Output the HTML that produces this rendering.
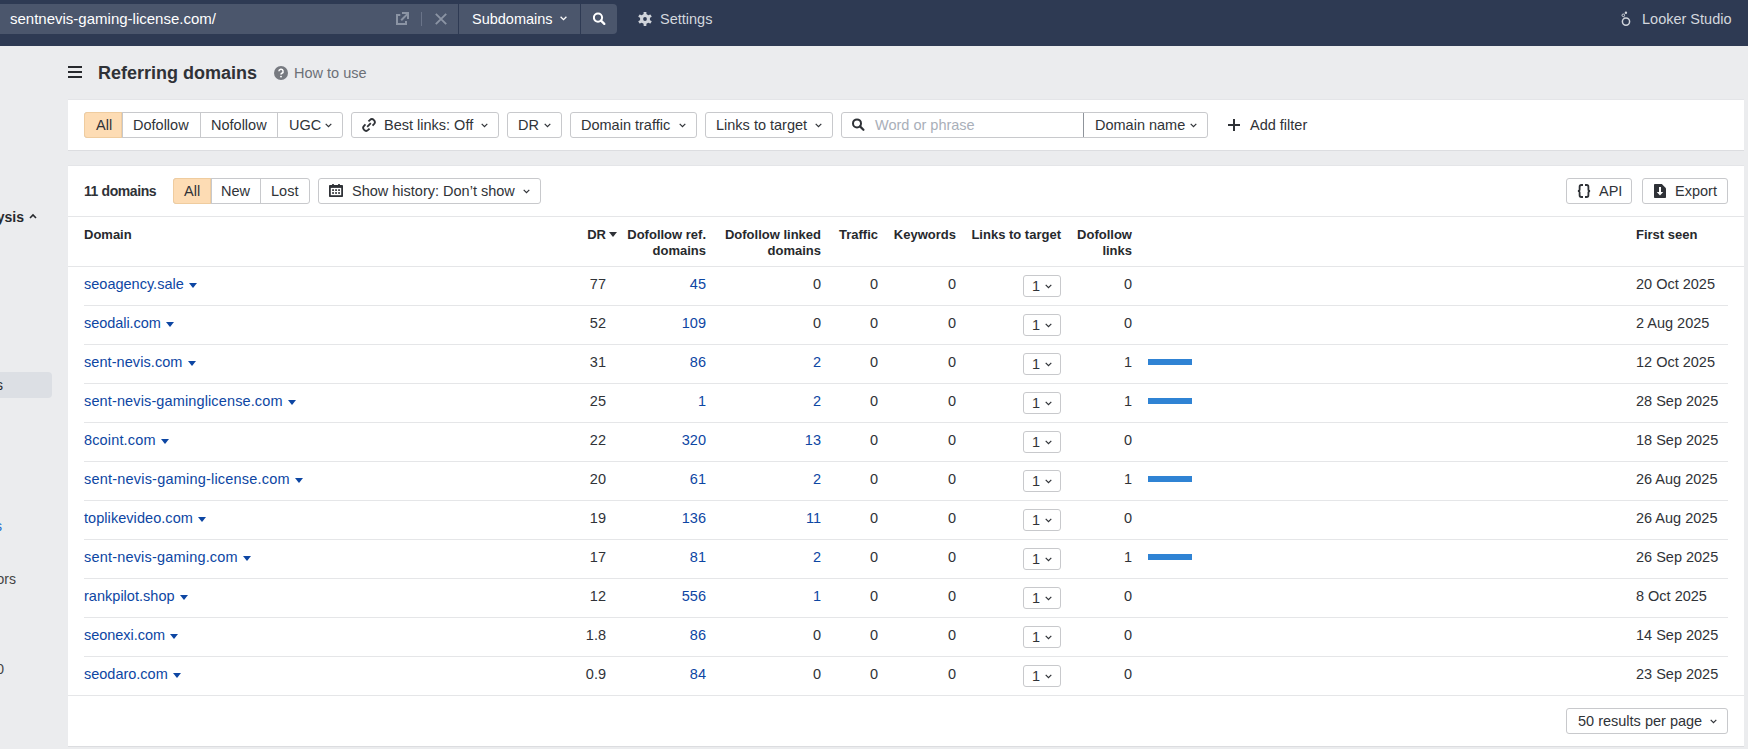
<!DOCTYPE html>
<html><head><meta charset="utf-8">
<style>
*{box-sizing:border-box;margin:0;padding:0}
html,body{width:1748px;height:749px;overflow:hidden;background:#ebecee;font-family:"Liberation Sans",sans-serif;color:#303338;font-size:14px}
.abs{position:absolute}
#top{position:absolute;left:0;top:0;width:1748px;height:46px;background:#2e3a53}
#inp{position:absolute;left:0;top:4px;width:458px;height:30px;background:#4b566c}
#url{position:absolute;left:10px;top:7px;color:#fff;font-size:15px;line-height:16px;white-space:nowrap}
#sub{position:absolute;left:459px;top:4px;width:121px;height:30px;background:#4b566c}
#srch{position:absolute;left:581px;top:4px;width:36px;height:30px;background:#4b566c;border-radius:0 4px 4px 0}
.wt{color:#fff;white-space:nowrap;position:absolute}
.lt{color:#d3d7de;white-space:nowrap;position:absolute}
#hdr{position:absolute;left:98px;top:63px;font-size:18px;font-weight:bold;color:#2f3237;white-space:nowrap;line-height:21px}
.panel{position:absolute;left:68px;width:1676px;background:#fff;box-shadow:0 1px 0 #dcdde0,0 -1px 0 #e4e5e8}
.btn{position:absolute;height:26px;border:1px solid #c8c9cc;border-radius:3px;background:#fff;white-space:nowrap;line-height:24px;font-size:14.5px;color:#303338}
.btn span{position:absolute;top:0}
.seg{position:absolute;top:0;height:24px;border-left:1px solid #c8c9cc}
.chev{position:absolute;width:7px;height:5px}
.sel{background:#fddcb4}
.line{position:absolute;height:1px;background:#e5e6e8}
.row{position:absolute;left:0;width:1748px;height:39px}
.c{position:absolute;top:10px;white-space:nowrap;font-size:14.5px;line-height:17px}
.r{text-align:right}
.blue{color:#0d46a3}
.th{position:absolute;font-weight:bold;font-size:13px;line-height:16px;text-align:right;white-space:nowrap;color:#27292d}
.bar{position:absolute;left:1148px;top:15px;width:44px;height:6px;background:#2f83d4}
.b1{position:absolute;left:1023px;top:9px;width:38px;height:22px;border:1px solid #c8c9cc;border-radius:3px}
</style></head><body>
<div id="top">
  <div id="inp"><div id="url">sentnevis-gaming-license.com/</div>
    <svg class="abs" style="left:396px;top:8px" width="14" height="14" viewBox="0 0 14 14"><path d="M4.3 2.9H1V12H10V9" fill="none" stroke="#8b94a4" stroke-width="2"/><path d="M6 1H12V7" fill="none" stroke="#8b94a4" stroke-width="2"/><path d="M5.2 8.2L11.8 1.6" stroke="#8b94a4" stroke-width="2"/></svg>
    <div class="abs" style="left:421px;top:8px;width:1px;height:14px;background:#6a7489"></div>
    <svg class="abs" style="left:435px;top:9px" width="12" height="12" viewBox="0 0 12 12"><path d="M0.8 0.8L11.2 11.2M11.2 0.8L0.8 11.2" stroke="#8b94a4" stroke-width="1.9"/></svg>
  </div>
  <div id="sub"><div class="wt" style="left:13px;top:7px;font-size:14.5px;line-height:16px">Subdomains</div>
    <svg class="abs" style="left:101px;top:12px" width="7" height="5" viewBox="0 0 7 5"><path d="M0.6 0.8L3.5 3.7L6.4 0.8" fill="none" stroke="#fff" stroke-width="1.3"/></svg></div>
  <div id="srch"><svg class="abs" style="left:12px;top:8px" width="13" height="13" viewBox="0 0 13 13"><circle cx="5" cy="5.6" r="4.1" fill="none" stroke="#fff" stroke-width="2"/><path d="M8 8.6L11.3 11.9" stroke="#fff" stroke-width="2.2" stroke-linecap="round"/></svg></div>
  <svg class="abs" style="left:638px;top:12px" width="14" height="14" viewBox="0 0 14 14"><g fill="#d0d4db"><rect x="5.6" y="0" width="2.8" height="3.5" rx="0.4" transform="rotate(0 7 7)"/><rect x="5.6" y="0" width="2.8" height="3.5" rx="0.4" transform="rotate(60 7 7)"/><rect x="5.6" y="0" width="2.8" height="3.5" rx="0.4" transform="rotate(120 7 7)"/><rect x="5.6" y="0" width="2.8" height="3.5" rx="0.4" transform="rotate(180 7 7)"/><rect x="5.6" y="0" width="2.8" height="3.5" rx="0.4" transform="rotate(240 7 7)"/><rect x="5.6" y="0" width="2.8" height="3.5" rx="0.4" transform="rotate(300 7 7)"/><circle cx="7" cy="7" r="5"/></g><circle cx="7" cy="7" r="1.9" fill="#2e3a53"/></svg>
  <div class="lt" style="left:660px;top:11px;font-size:14.5px;line-height:16px">Settings</div>
  <svg class="abs" style="left:1614px;top:8px" width="26" height="22" viewBox="0 0 26 22"><circle cx="12" cy="13.6" r="3.6" fill="none" stroke="#d0d4db" stroke-width="1.5"/><circle cx="9.3" cy="7.3" r="1.3" fill="none" stroke="#d0d4db" stroke-width="1"/><circle cx="11.9" cy="4.8" r="1.2" fill="#d0d4db"/><path d="M10.3 6.3L11.2 5.5" stroke="#a0a6b2" stroke-width="0.8"/><path d="M9.8 8.6L10.6 10.3" stroke="#a0a6b2" stroke-width="0.8"/></svg>
  <div class="lt" style="left:1642px;top:11px;font-size:14.5px;line-height:16px">Looker Studio</div>
</div>

<!-- sidebar remnants -->
<div class="abs" style="left:-60px;top:209px;font-weight:bold;font-size:14px;color:#27292d;white-space:nowrap;width:84px;text-align:right">Analysis</div>
<svg class="abs" style="left:29px;top:213px" width="8" height="6" viewBox="0 0 8 6"><path d="M1 5L4 2L7 5" fill="none" stroke="#27292d" stroke-width="1.6"/></svg>
<div class="abs" style="left:-10px;top:372px;width:62px;height:26px;background:#dcdfe4;border-radius:4px"></div>
<div class="abs" style="left:-60px;top:377px;width:63px;text-align:right;font-size:14px;color:#27292d">ages</div>
<div class="abs" style="left:-61px;top:518px;width:63px;text-align:right;font-size:14px;color:#1d6fd0">links</div>
<div class="abs" style="left:-60px;top:571px;width:76px;text-align:right;font-size:14px;color:#444">Competitors</div>
<div class="abs" style="left:-60px;top:661px;width:64px;text-align:right;font-size:14px;color:#444">100</div>

<!-- header -->
<svg class="abs" style="left:68px;top:66px" width="14" height="12" viewBox="0 0 14 12"><path d="M0 1H14M0 6H14M0 11H14" stroke="#27292d" stroke-width="2"/></svg>
<div id="hdr">Referring domains</div>
<svg class="abs" style="left:274px;top:66px" width="14" height="14" viewBox="0 0 14 14"><circle cx="7" cy="7" r="7" fill="#777a80"/><path d="M4.9 5.3a2.1 2.1 0 1 1 3 1.9c-.6.3-.9.6-.9 1.3" fill="none" stroke="#fff" stroke-width="1.5"/><circle cx="7" cy="10.6" r=".95" fill="#fff"/></svg>
<div class="abs" style="left:294px;top:65px;font-size:14.5px;color:#6c7077;white-space:nowrap;line-height:16px">How to use</div>

<!-- filter panel -->
<div class="panel" style="top:100px;height:50px"></div>
<div id="filters"><div class="btn" style="left:84px;top:112px;width:259px"><div class="seg" style="left:37px"></div><div class="seg" style="left:115px"></div><div class="seg" style="left:192px"></div><div class="abs sel" style="left:-1px;top:-1px;width:38px;height:26px;border:1px solid #efcc9f;border-radius:3px 0 0 3px"></div><span style="left:11px">All</span><span style="left:48px">Dofollow</span><span style="left:126px">Nofollow</span><span style="left:204px">UGC</span><svg class="chev" style="left:240px;top:10px" viewBox="0 0 7 5"><path d="M0.7 0.9L3.5 3.7L6.3 0.9" fill="none" stroke="#2f3237" stroke-width="1.2"/></svg></div>
<div class="btn" style="left:351px;top:112px;width:148px"><svg class="abs" style="left:10px;top:5px" width="14" height="14" viewBox="0 0 14 14"><g fill="none" stroke="#2f3237" stroke-width="1.85"><path d="M6.44 3.46L7.85 2.05A2.9 2.9 0 0 1 11.95 6.15L10.54 7.56"/><path d="M7.56 10.54L6.15 11.95A2.9 2.9 0 0 1 2.05 7.85L3.46 6.44"/><path d="M5.2 8.8L8.8 5.2"/></g></svg><span style="left:32px">Best links: Off</span><svg class="chev" style="left:129px;top:10px" viewBox="0 0 7 5"><path d="M0.7 0.9L3.5 3.7L6.3 0.9" fill="none" stroke="#2f3237" stroke-width="1.2"/></svg></div>
<div class="btn" style="left:507px;top:112px;width:55px"><span style="left:10px">DR</span><svg class="chev" style="left:36px;top:10px" viewBox="0 0 7 5"><path d="M0.7 0.9L3.5 3.7L6.3 0.9" fill="none" stroke="#2f3237" stroke-width="1.2"/></svg></div>
<div class="btn" style="left:570px;top:112px;width:127px"><span style="left:10px">Domain traffic</span><svg class="chev" style="left:108px;top:10px" viewBox="0 0 7 5"><path d="M0.7 0.9L3.5 3.7L6.3 0.9" fill="none" stroke="#2f3237" stroke-width="1.2"/></svg></div>
<div class="btn" style="left:705px;top:112px;width:128px"><span style="left:10px">Links to target</span><svg class="chev" style="left:109px;top:10px" viewBox="0 0 7 5"><path d="M0.7 0.9L3.5 3.7L6.3 0.9" fill="none" stroke="#2f3237" stroke-width="1.2"/></svg></div>
<div class="btn" style="left:841px;top:112px;width:367px"><svg class="abs" style="left:10px;top:5px" width="13" height="13" viewBox="0 0 13 13"><circle cx="5" cy="5.4" r="4" fill="none" stroke="#2f3237" stroke-width="2"/><path d="M8 8.4L11.4 11.8" stroke="#2f3237" stroke-width="2.2" stroke-linecap="round"/></svg><span style="left:33px;color:#a9afb9">Word or phrase</span><div class="seg" style="left:241px;border-color:#8f949b"></div><span style="left:253px">Domain name</span><svg class="chev" style="left:348px;top:10px" viewBox="0 0 7 5"><path d="M0.7 0.9L3.5 3.7L6.3 0.9" fill="none" stroke="#2f3237" stroke-width="1.2"/></svg></div>
<svg class="abs" style="left:1228px;top:119px" width="12" height="12" viewBox="0 0 12 12"><path d="M6 0V12M0 6H12" stroke="#2f3237" stroke-width="2"/></svg>
<div class="abs" style="left:1250px;top:117px;font-size:14.5px;line-height:17px;white-space:nowrap;color:#2f3237">Add filter</div></div>

<!-- table panel -->
<div class="panel" style="top:166px;height:580px"></div>
<div id="tbl"><div class="abs" style="left:84px;top:183px;font-weight:bold;font-size:14px;line-height:16px;white-space:nowrap;color:#2f3237;letter-spacing:-0.4px">11 domains</div>
<div class="btn" style="left:173px;top:178px;width:137px"><div class="seg" style="left:37px"></div><div class="seg" style="left:86px"></div><div class="abs sel" style="left:-1px;top:-1px;width:38px;height:26px;border:1px solid #efcc9f;border-radius:3px 0 0 3px"></div><span style="left:10px">All</span><span style="left:47px">New</span><span style="left:97px">Lost</span></div>
<div class="btn" style="left:318px;top:178px;width:223px"><svg class="abs" style="left:10px;top:5px" width="14" height="14" viewBox="0 0 14 14"><rect x="3" y="0" width="2" height="2" rx="0.6" fill="#2f3237"/><rect x="9" y="0" width="2" height="2" rx="0.6" fill="#2f3237"/><rect x="0" y="1" width="14" height="12" rx="0.8" fill="#2f3237"/><rect x="1.8" y="3.9" width="10.4" height="7.3" fill="#fff"/><g fill="#2f3237"><rect x="3.1" y="5.3" width="1.9" height="1.6"/><rect x="6.1" y="5.3" width="1.9" height="1.6"/><rect x="9.1" y="5.3" width="1.9" height="1.6"/><rect x="3.1" y="8.2" width="1.9" height="1.6"/><rect x="6.1" y="8.2" width="1.9" height="1.6"/><rect x="9.1" y="8.2" width="1.9" height="1.6"/></g></svg><span style="left:33px">Show history: Don’t show</span><svg class="chev" style="left:204px;top:10px" viewBox="0 0 7 5"><path d="M0.7 0.9L3.5 3.7L6.3 0.9" fill="none" stroke="#2f3237" stroke-width="1.2"/></svg></div>
<div class="btn" style="left:1566px;top:178px;width:66px"><svg class="abs" style="left:10px;top:5px" width="14" height="14" viewBox="0 0 14 14"><g fill="none" stroke="#2f3237" stroke-width="1.8"><path d="M6 1H4.3Q2.6 1 2.6 2.7V5.4Q2.6 7 0.9 7Q2.6 7 2.6 8.6V11.3Q2.6 13 4.3 13H6"/><path d="M8 1H9.7Q11.4 1 11.4 2.7V5.4Q11.4 7 13.1 7Q11.4 7 11.4 8.6V11.3Q11.4 13 9.7 13H8"/></g></svg><span style="left:32px">API</span></div>
<div class="btn" style="left:1642px;top:178px;width:86px"><svg class="abs" style="left:11px;top:5px" width="12" height="14" viewBox="0 0 12 14"><path d="M0 0.8Q0 0 0.8 0H7.8L12 4.2V13.2Q12 14 11.2 14H0.8Q0 14 0 13.2Z" fill="#2f3237"/><rect x="5" y="3" width="2" height="5.4" fill="#fff"/><path d="M2.8 8.1H9.2L6 11.4Z" fill="#fff"/></svg><span style="left:32px">Export</span></div>
<div class="line" style="left:68px;top:216px;width:1676px"></div>
<div class="th" style="left:84px;top:227px;text-align:left">Domain</div>
<div class="th" style="right:1142px;top:227px">DR</div>
<svg class="abs" style="left:609px;top:232px" width="8" height="5" viewBox="0 0 8 5"><path d="M0 0H8L4 5z" fill="#2f3237"/></svg>
<div class="th" style="right:1042px;top:227px">Dofollow ref.<br>domains</div>
<div class="th" style="right:927px;top:227px">Dofollow linked<br>domains</div>
<div class="th" style="right:870px;top:227px">Traffic</div>
<div class="th" style="right:792px;top:227px">Keywords</div>
<div class="th" style="right:687px;top:227px">Links to target</div>
<div class="th" style="right:616px;top:227px">Dofollow<br>links</div>
<div class="th" style="left:1636px;top:227px;text-align:left">First seen</div>
<div class="line" style="left:68px;top:266px;width:1676px"></div>
<div class="row" style="top:266px"><div class="c blue" style="left:84px"><span style="letter-spacing:0.007px">seoagency.sale</span><svg style="margin-left:5px;vertical-align:1px" width="8" height="5" viewBox="0 0 8 5"><path d="M0 0H8L4 5z" fill="#0d46a3"/></svg></div><div class="c r " style="right:1142px">77</div><div class="c r blue" style="right:1042px">45</div><div class="c r " style="right:927px">0</div><div class="c r " style="right:870px">0</div><div class="c r " style="right:792px">0</div><div class="b1"><span class="abs" style="left:8px;top:2px;font-size:14.5px;line-height:17px">1</span><svg class="chev" style="left:21px;top:8px" viewBox="0 0 7 5"><path d="M0.7 0.9L3.5 3.7L6.3 0.9" fill="none" stroke="#2f3237" stroke-width="1.2"/></svg></div><div class="c r " style="right:616px">0</div><div class="c" style="left:1636px">20 Oct 2025</div></div>
<div class="line" style="left:84px;top:305px;width:1644px"></div>
<div class="row" style="top:305px"><div class="c blue" style="left:84px"><span style="letter-spacing:-0.055px">seodali.com</span><svg style="margin-left:5px;vertical-align:1px" width="8" height="5" viewBox="0 0 8 5"><path d="M0 0H8L4 5z" fill="#0d46a3"/></svg></div><div class="c r " style="right:1142px">52</div><div class="c r blue" style="right:1042px">109</div><div class="c r " style="right:927px">0</div><div class="c r " style="right:870px">0</div><div class="c r " style="right:792px">0</div><div class="b1"><span class="abs" style="left:8px;top:2px;font-size:14.5px;line-height:17px">1</span><svg class="chev" style="left:21px;top:8px" viewBox="0 0 7 5"><path d="M0.7 0.9L3.5 3.7L6.3 0.9" fill="none" stroke="#2f3237" stroke-width="1.2"/></svg></div><div class="c r " style="right:616px">0</div><div class="c" style="left:1636px">2 Aug 2025</div></div>
<div class="line" style="left:84px;top:344px;width:1644px"></div>
<div class="row" style="top:344px"><div class="c blue" style="left:84px"><span style="letter-spacing:0.071px">sent-nevis.com</span><svg style="margin-left:5px;vertical-align:1px" width="8" height="5" viewBox="0 0 8 5"><path d="M0 0H8L4 5z" fill="#0d46a3"/></svg></div><div class="c r " style="right:1142px">31</div><div class="c r blue" style="right:1042px">86</div><div class="c r blue" style="right:927px">2</div><div class="c r " style="right:870px">0</div><div class="c r " style="right:792px">0</div><div class="b1"><span class="abs" style="left:8px;top:2px;font-size:14.5px;line-height:17px">1</span><svg class="chev" style="left:21px;top:8px" viewBox="0 0 7 5"><path d="M0.7 0.9L3.5 3.7L6.3 0.9" fill="none" stroke="#2f3237" stroke-width="1.2"/></svg></div><div class="c r " style="right:616px">1</div><div class="bar"></div><div class="c" style="left:1636px">12 Oct 2025</div></div>
<div class="line" style="left:84px;top:383px;width:1644px"></div>
<div class="row" style="top:383px"><div class="c blue" style="left:84px"><span style="letter-spacing:0.129px">sent-nevis-gaminglicense.com</span><svg style="margin-left:5px;vertical-align:1px" width="8" height="5" viewBox="0 0 8 5"><path d="M0 0H8L4 5z" fill="#0d46a3"/></svg></div><div class="c r " style="right:1142px">25</div><div class="c r blue" style="right:1042px">1</div><div class="c r blue" style="right:927px">2</div><div class="c r " style="right:870px">0</div><div class="c r " style="right:792px">0</div><div class="b1"><span class="abs" style="left:8px;top:2px;font-size:14.5px;line-height:17px">1</span><svg class="chev" style="left:21px;top:8px" viewBox="0 0 7 5"><path d="M0.7 0.9L3.5 3.7L6.3 0.9" fill="none" stroke="#2f3237" stroke-width="1.2"/></svg></div><div class="c r " style="right:616px">1</div><div class="bar"></div><div class="c" style="left:1636px">28 Sep 2025</div></div>
<div class="line" style="left:84px;top:422px;width:1644px"></div>
<div class="row" style="top:422px"><div class="c blue" style="left:84px"><span style="letter-spacing:0.15px">8coint.com</span><svg style="margin-left:5px;vertical-align:1px" width="8" height="5" viewBox="0 0 8 5"><path d="M0 0H8L4 5z" fill="#0d46a3"/></svg></div><div class="c r " style="right:1142px">22</div><div class="c r blue" style="right:1042px">320</div><div class="c r blue" style="right:927px">13</div><div class="c r " style="right:870px">0</div><div class="c r " style="right:792px">0</div><div class="b1"><span class="abs" style="left:8px;top:2px;font-size:14.5px;line-height:17px">1</span><svg class="chev" style="left:21px;top:8px" viewBox="0 0 7 5"><path d="M0.7 0.9L3.5 3.7L6.3 0.9" fill="none" stroke="#2f3237" stroke-width="1.2"/></svg></div><div class="c r " style="right:616px">0</div><div class="c" style="left:1636px">18 Sep 2025</div></div>
<div class="line" style="left:84px;top:461px;width:1644px"></div>
<div class="row" style="top:461px"><div class="c blue" style="left:84px"><span style="letter-spacing:0.203px">sent-nevis-gaming-license.com</span><svg style="margin-left:5px;vertical-align:1px" width="8" height="5" viewBox="0 0 8 5"><path d="M0 0H8L4 5z" fill="#0d46a3"/></svg></div><div class="c r " style="right:1142px">20</div><div class="c r blue" style="right:1042px">61</div><div class="c r blue" style="right:927px">2</div><div class="c r " style="right:870px">0</div><div class="c r " style="right:792px">0</div><div class="b1"><span class="abs" style="left:8px;top:2px;font-size:14.5px;line-height:17px">1</span><svg class="chev" style="left:21px;top:8px" viewBox="0 0 7 5"><path d="M0.7 0.9L3.5 3.7L6.3 0.9" fill="none" stroke="#2f3237" stroke-width="1.2"/></svg></div><div class="c r " style="right:616px">1</div><div class="bar"></div><div class="c" style="left:1636px">26 Aug 2025</div></div>
<div class="line" style="left:84px;top:500px;width:1644px"></div>
<div class="row" style="top:500px"><div class="c blue" style="left:84px"><span style="letter-spacing:0.056px">toplikevideo.com</span><svg style="margin-left:5px;vertical-align:1px" width="8" height="5" viewBox="0 0 8 5"><path d="M0 0H8L4 5z" fill="#0d46a3"/></svg></div><div class="c r " style="right:1142px">19</div><div class="c r blue" style="right:1042px">136</div><div class="c r blue" style="right:927px">11</div><div class="c r " style="right:870px">0</div><div class="c r " style="right:792px">0</div><div class="b1"><span class="abs" style="left:8px;top:2px;font-size:14.5px;line-height:17px">1</span><svg class="chev" style="left:21px;top:8px" viewBox="0 0 7 5"><path d="M0.7 0.9L3.5 3.7L6.3 0.9" fill="none" stroke="#2f3237" stroke-width="1.2"/></svg></div><div class="c r " style="right:616px">0</div><div class="c" style="left:1636px">26 Aug 2025</div></div>
<div class="line" style="left:84px;top:539px;width:1644px"></div>
<div class="row" style="top:539px"><div class="c blue" style="left:84px"><span style="letter-spacing:0.186px">sent-nevis-gaming.com</span><svg style="margin-left:5px;vertical-align:1px" width="8" height="5" viewBox="0 0 8 5"><path d="M0 0H8L4 5z" fill="#0d46a3"/></svg></div><div class="c r " style="right:1142px">17</div><div class="c r blue" style="right:1042px">81</div><div class="c r blue" style="right:927px">2</div><div class="c r " style="right:870px">0</div><div class="c r " style="right:792px">0</div><div class="b1"><span class="abs" style="left:8px;top:2px;font-size:14.5px;line-height:17px">1</span><svg class="chev" style="left:21px;top:8px" viewBox="0 0 7 5"><path d="M0.7 0.9L3.5 3.7L6.3 0.9" fill="none" stroke="#2f3237" stroke-width="1.2"/></svg></div><div class="c r " style="right:616px">1</div><div class="bar"></div><div class="c" style="left:1636px">26 Sep 2025</div></div>
<div class="line" style="left:84px;top:578px;width:1644px"></div>
<div class="row" style="top:578px"><div class="c blue" style="left:84px"><span style="letter-spacing:0.021px">rankpilot.shop</span><svg style="margin-left:5px;vertical-align:1px" width="8" height="5" viewBox="0 0 8 5"><path d="M0 0H8L4 5z" fill="#0d46a3"/></svg></div><div class="c r " style="right:1142px">12</div><div class="c r blue" style="right:1042px">556</div><div class="c r blue" style="right:927px">1</div><div class="c r " style="right:870px">0</div><div class="c r " style="right:792px">0</div><div class="b1"><span class="abs" style="left:8px;top:2px;font-size:14.5px;line-height:17px">1</span><svg class="chev" style="left:21px;top:8px" viewBox="0 0 7 5"><path d="M0.7 0.9L3.5 3.7L6.3 0.9" fill="none" stroke="#2f3237" stroke-width="1.2"/></svg></div><div class="c r " style="right:616px">0</div><div class="c" style="left:1636px">8 Oct 2025</div></div>
<div class="line" style="left:84px;top:617px;width:1644px"></div>
<div class="row" style="top:617px"><div class="c blue" style="left:84px"><span style="letter-spacing:-0.036px">seonexi.com</span><svg style="margin-left:5px;vertical-align:1px" width="8" height="5" viewBox="0 0 8 5"><path d="M0 0H8L4 5z" fill="#0d46a3"/></svg></div><div class="c r " style="right:1142px">1.8</div><div class="c r blue" style="right:1042px">86</div><div class="c r " style="right:927px">0</div><div class="c r " style="right:870px">0</div><div class="c r " style="right:792px">0</div><div class="b1"><span class="abs" style="left:8px;top:2px;font-size:14.5px;line-height:17px">1</span><svg class="chev" style="left:21px;top:8px" viewBox="0 0 7 5"><path d="M0.7 0.9L3.5 3.7L6.3 0.9" fill="none" stroke="#2f3237" stroke-width="1.2"/></svg></div><div class="c r " style="right:616px">0</div><div class="c" style="left:1636px">14 Sep 2025</div></div>
<div class="line" style="left:84px;top:656px;width:1644px"></div>
<div class="row" style="top:656px"><div class="c blue" style="left:84px"><span style="letter-spacing:-0.009px">seodaro.com</span><svg style="margin-left:5px;vertical-align:1px" width="8" height="5" viewBox="0 0 8 5"><path d="M0 0H8L4 5z" fill="#0d46a3"/></svg></div><div class="c r " style="right:1142px">0.9</div><div class="c r blue" style="right:1042px">84</div><div class="c r " style="right:927px">0</div><div class="c r " style="right:870px">0</div><div class="c r " style="right:792px">0</div><div class="b1"><span class="abs" style="left:8px;top:2px;font-size:14.5px;line-height:17px">1</span><svg class="chev" style="left:21px;top:8px" viewBox="0 0 7 5"><path d="M0.7 0.9L3.5 3.7L6.3 0.9" fill="none" stroke="#2f3237" stroke-width="1.2"/></svg></div><div class="c r " style="right:616px">0</div><div class="c" style="left:1636px">23 Sep 2025</div></div>
<div class="line" style="left:68px;top:695px;width:1676px"></div>
<div class="btn" style="left:1566px;top:708px;width:162px"><span style="left:11px">50 results per page</span><svg class="chev" style="left:143px;top:10px" viewBox="0 0 7 5"><path d="M0.7 0.9L3.5 3.7L6.3 0.9" fill="none" stroke="#2f3237" stroke-width="1.2"/></svg></div></div>
</body></html>
